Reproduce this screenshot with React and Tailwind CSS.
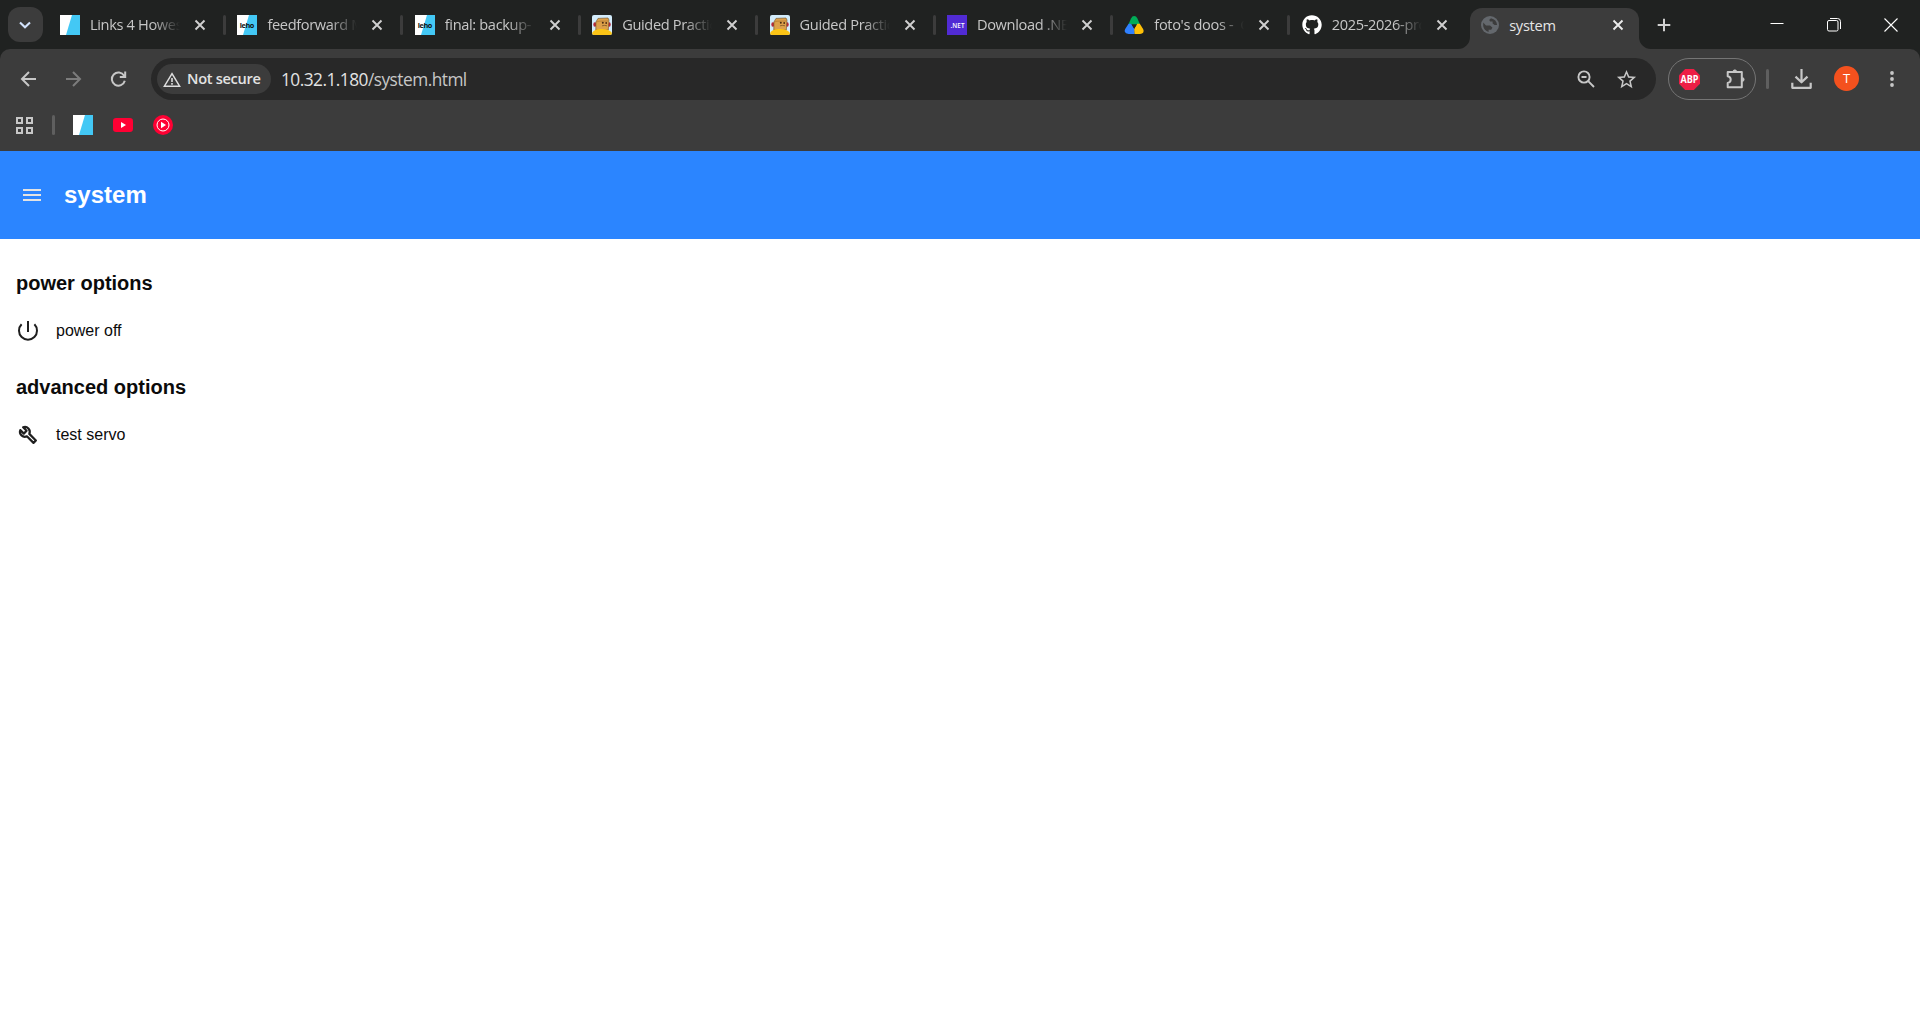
import clsx from "clsx";
import { FaGithub } from "react-icons/fa";
import { MdStarBorder } from "react-icons/md";

const tabs = [
  { title: "Links 4 Howest", icon: "howest" },
  { title: "feedforward MVP", icon: "leho" },
  { title: "final: backup-", icon: "leho" },
  { title: "Guided Practice", icon: "robot" },
  { title: "Guided Practice", icon: "robot" },
  { title: "Download .NET", icon: "dotnet" },
  { title: "foto's doos -\u00a0 G", icon: "drive" },
  { title: "2025-2026-pro", icon: "github" },
];

function HowestIcon({ label }) {
  return (
    <svg viewBox="0 0 20 20" className="size-5 shrink-0">
      <rect width="20" height="20" fill="#fff" />
      <path d="M12 0H20V20H6Z" fill="#43c8f5" />
      {label && (
        <text x="10" y="12.8" textAnchor="middle" fontSize="7.3" fontWeight="700" fontFamily="Open Sans, sans-serif" fill="#111" textLength="14.5">
          {label}
        </text>
      )}
    </svg>
  );
}

function RobotIcon() {
  return (
    <svg viewBox="0 0 20 20" className="size-5 shrink-0 rounded-[2px]">
      <rect width="20" height="20" fill="#d3ecfb" />
      <ellipse cx="2.9" cy="9.5" rx="1.6" ry="2.3" fill="#b8283a" />
      <ellipse cx="17.3" cy="9.5" rx="1.4" ry="2.2" fill="#b8283a" />
      <path d="M6 3.4 16 3 17 5 16.3 15H3.8L3.9 7Z" fill="#dda04a" stroke="#6b4a22" strokeWidth=".6" />
      <path d="M4.5 7 7 6.2 16 6" stroke="#a8712c" strokeWidth=".6" fill="none" />
      <circle cx="10.8" cy="7.8" r="1" fill="#4a2c12" />
      <circle cx="14.2" cy="8" r=".9" fill="#4a2c12" />
      <path d="M10 10.8Q12.5 10 15 10.8" stroke="#6b4a22" strokeWidth=".7" fill="none" />
      <path d="M0 18Q2.5 13.8 9 14 17 13.6 20 18V20H0Z" fill="#fbc416" />
    </svg>
  );
}

function DotnetIcon() {
  return (
    <svg viewBox="0 0 20 20" className="size-5 shrink-0">
      <rect width="20" height="20" fill="#512bd4" />
      <text x="10.5" y="12.5" textAnchor="middle" fontSize="6.3" fontWeight="600" fontFamily="Open Sans, sans-serif" fill="#fff" textLength="14">
        .NET
      </text>
    </svg>
  );
}

function DriveIcon() {
  return (
    <svg viewBox="0 0 20 20" className="size-5 shrink-0">
      <path d="M4.6 9 7 3.4Q8.2 1 10.2 1T13.4 3.4L15.8 9 10.2 11Z" fill="#00ac57" />
      <path d="M4.6 8.8H7.2L10.6 14.6V18.9H4.6Q1.4 18.9.8 16.8 .4 15.6 1.2 14Z" fill="#2f80ff" />
      <path d="M15.8 8.8H13.2L10.2 14 10.6 18.9H15.8Q19 18.9 19.5 16.8 19.9 15.6 19.1 14Z" fill="#ffc107" />
      <path d="M7.4 9.2H13L10.2 13.4Z" fill="#202221" />
    </svg>
  );
}

function GlobeIcon() {
  return (
    <svg viewBox="0 0 20 20" className="size-5 shrink-0">
      <circle cx="10" cy="10" r="9" fill="#64686d" />
      <path d="M11 3.2Q16.5 4.5 17.1 10H14.6L12.6 8.6V6.6H10.2L9.2 5Z" fill="#3c3c3c" />
      <path d="M3.2 7.5V11Q4 15.4 8.6 16.9V14.8H11.2L12.4 12.6 10 10.4H6Z" fill="#3c3c3c" />
    </svg>
  );
}

function Favicon({ name }) {
  switch (name) {
    case "howest":
      return <HowestIcon />;
    case "leho":
      return <HowestIcon label="leho" />;
    case "robot":
      return <RobotIcon />;
    case "dotnet":
      return <DotnetIcon />;
    case "drive":
      return <DriveIcon />;
    case "github":
      return <FaGithub size={20} className="shrink-0 text-white" />;
    default:
      return <GlobeIcon />;
  }
}

function CloseIcon({ className }) {
  return (
    <svg viewBox="0 0 12 12" className={clsx("size-3 shrink-0", className)}>
      <path d="M1.5 1.5 10.5 10.5M10.5 1.5 1.5 10.5" stroke="currentColor" strokeWidth="1.9" />
    </svg>
  );
}

function Tab({ title, icon, last }) {
  return (
    <div className="flex h-full w-[177.4px] shrink-0 items-center pl-[11px]">
      <Favicon name={icon} />
      <span className="ml-[10px] w-[90px] overflow-hidden pt-px whitespace-nowrap text-[14.6px] tracking-[-0.35px] text-[#c7c7c7] mask-r-from-70% mask-r-to-100%">
        {title}
      </span>
      <CloseIcon className="ml-[14px] text-[#d0d0d0]" />
      {/* no divider next to the active tab */}
      {!last && <span className="ml-[17px] h-5 w-[3px] rounded-full bg-[#3c3c3c]" />}
    </div>
  );
}

function ActiveTab() {
  return (
    <div className="relative ml-[2px] mt-2 flex h-[41px] w-[169px] shrink-0 items-center self-start rounded-t-xl bg-[#3c3c3c] pb-[7px] pl-[10px]">
      <svg viewBox="0 0 12 12" className="absolute bottom-0 -left-3 size-3">
        <path d="M12 0V12H0A12 12 0 0 0 12 0Z" fill="#3c3c3c" />
      </svg>
      <svg viewBox="0 0 12 12" className="absolute -right-3 bottom-0 size-3">
        <path d="M0 0V12H12A12 12 0 0 1 0 0Z" fill="#3c3c3c" />
      </svg>
      <Favicon name="globe" />
      <span className="ml-[9px] w-[98px] pt-px text-[14.6px] tracking-[-0.25px] text-[#e6e6e6]">system</span>
      <CloseIcon className="ml-[5px] text-[#ececec]" />
    </div>
  );
}

function TabStrip() {
  return (
    <div className="flex h-[49px] items-center bg-[#202221]">
      <button className="ml-2 flex size-[35px] shrink-0 items-center justify-center rounded-xl bg-[#3c3c3c] pr-px">
        <svg viewBox="0 0 12 8" className="h-2 w-3">
          <path d="M1 1.5 6 6.3 11 1.5" fill="none" stroke="#d3e3fd" strokeWidth="2.1" />
        </svg>
      </button>
      <div className="ml-[6px] flex h-full items-center">
        {tabs.map((tab, i) => (
          <Tab key={i} {...tab} last={i === tabs.length - 1} />
        ))}
        <ActiveTab />
      </div>
      <svg viewBox="0 0 14 14" className="ml-[18px] size-[14px] shrink-0">
        <path d="M7 .7V13.3M.7 7H13.3" stroke="#d0d0d0" strokeWidth="2" />
      </svg>
      {/* Window controls */}
      <div className="ml-auto flex items-center gap-[43px] pr-[22px] text-white">
        <svg viewBox="0 0 14 14" className="size-[14px]">
          <path d="M.5 5.5H13.5" stroke="currentColor" />
        </svg>
        <svg viewBox="0 0 14 14" className="size-[14px]" fill="none" stroke="currentColor">
          <rect x=".5" y="2.5" width="10.5" height="10.5" rx="1.5" />
          <path d="M3 .5H10.5Q13.5.5 13.5 3.5V11" />
        </svg>
        <svg viewBox="0 0 14 14" className="size-[14px]">
          <path d="M.5.5 13.5 13.5M13.5.5.5 13.5" stroke="currentColor" strokeWidth="1.1" />
        </svg>
      </div>
    </div>
  );
}

function AddressBar() {
  return (
    <div className="ml-[24px] flex h-[42px] w-[1505px] items-center rounded-full bg-[#282828] pl-[6px]">
      <div className="flex h-[30px] w-[114px] items-center rounded-full bg-[#3c3c3c] pl-[6px]">
        <svg viewBox="0 0 18 15" className="h-[15px] w-[18px]" fill="none" stroke="#dedede">
          <path d="M9 1.6 16.6 14.2H1.4Z" strokeWidth="1.5" />
          <path d="M9 6V10M9 11V12.7" strokeWidth="1.6" />
        </svg>
        <span className="ml-[6px] whitespace-nowrap text-[14.6px] font-semibold tracking-[-0.3px] text-[#e3e3e3]">Not secure</span>
      </div>
      <span className="ml-[10px] whitespace-nowrap pt-px text-[17.3px] tracking-[-0.52px] text-[#e3e3e3]">
        10.32.1.180<span className="text-[#c7c7c7]">/system.html</span>
      </span>
      <svg viewBox="0 0 18 18" className="ml-auto size-[18px]" fill="none" stroke="#c7c7c7" strokeWidth="1.9">
        <circle cx="7" cy="7" r="5.6" />
        <path d="M11.2 11.2 17 17M4.5 7H9.5" />
      </svg>
      <MdStarBorder size={23} className="mr-[18px] ml-[20px] text-[#c7c7c7]" />
    </div>
  );
}

function Toolbar() {
  return (
    <div className="flex h-[60px] items-center pl-[20px]">
      <svg viewBox="0 0 17 17" className="size-[17px]" fill="none" stroke="#c7c7c7" strokeWidth="2">
        <path d="M16 8H2.5M9 1 2 8 9 15" />
      </svg>
      <svg viewBox="0 0 17 17" className="ml-7 size-[17px]" fill="none" stroke="#7c7c7c" strokeWidth="2">
        <path d="M1 8H14.5M8 1 15 8 8 15" />
      </svg>
      <svg viewBox="0 0 17 17" className="ml-7 size-[17px]" fill="none" stroke="#c7c7c7" strokeWidth="2">
        <path d="M14.8 9.8A6.6 6.6 0 1 1 14.1 4.7M15.2.5V5.9H9.8" />
      </svg>
      <AddressBar />
      <div className="ml-3 flex h-[42px] w-[88px] items-center rounded-full border border-[#757575] pl-[10px]">
        <svg viewBox="0 0 21 21" className="size-[21px]">
          <path d="M6.2 0H14.8L21 6.2V14.8L14.8 21H6.2L0 14.8V6.2Z" fill="#ed1e45" />
          <text x="10.5" y="14" textAnchor="middle" fontSize="10" fontWeight="700" fontFamily="Open Sans, sans-serif" fill="#fff" textLength="18" lengthAdjust="spacingAndGlyphs">
            ABP
          </text>
        </svg>
        <svg viewBox="0 0 22 22" className="ml-[24px] size-[22px]">
          <path d="M3.7 4H17.8V19.2H3.7V15Q6.7 14.5 6.7 11.6T3.7 8.2Z" fill="none" stroke="#c7c7c7" strokeWidth="2" strokeLinejoin="round" />
          <path d="M8.9 3.3A2 2 0 0 1 12.7 3.3ZM18.7 9.6A2 2 0 0 1 18.7 13.4Z" fill="#c7c7c7" stroke="#c7c7c7" />
        </svg>
      </div>
      <span className="ml-[10px] h-5 w-[3px] rounded-full bg-[#5f5f5f]" />
      <svg viewBox="0 0 22 22" className="ml-[21px] size-[22px]" fill="none" stroke="#c7c7c7" strokeWidth="2.2">
        <path d="M11.5 1V14M5.5 8.6 11.5 14.3 17.5 8.6M2.3 14.8V19.8H20.7V14.8" strokeLinejoin="round" />
      </svg>
      <div className="mb-px ml-[22px] flex size-[25px] items-center justify-center rounded-full bg-[#f4511e] text-[13px] text-white">
        T
      </div>
      <svg viewBox="0 0 4 16" className="mb-px ml-[30.5px] h-4 w-1" fill="#c7c7c7">
        <circle cx="2" cy="2" r="1.9" />
        <circle cx="2" cy="8" r="1.9" />
        <circle cx="2" cy="14" r="1.9" />
      </svg>
    </div>
  );
}

function BookmarksBar() {
  return (
    <div className="flex h-[42px] items-center pb-[10px] pl-[15px]">
      <svg viewBox="0 0 19 19" className="size-[19px]" fill="none" stroke="#c7c7c7" strokeWidth="2">
        <rect x="2" y="2" width="5" height="5" />
        <rect x="12" y="2" width="5" height="5" />
        <rect x="2" y="12" width="5" height="5" />
        <rect x="12" y="12" width="5" height="5" />
      </svg>
      <span className="ml-[18px] h-5 w-[3px] rounded-full bg-[#5f5f5f]" />
      <div className="ml-[18px] flex items-center gap-5">
        <HowestIcon />
        <svg viewBox="0 0 20 20" className="size-5">
          <rect y="3" width="20" height="14" rx="3.2" fill="#ff0033" />
          <path d="M8 7 13 10 8 13Z" fill="#fff" />
        </svg>
        <svg viewBox="0 0 20 20" className="size-5">
          <circle cx="10" cy="10" r="10" fill="#ff0033" />
          <circle cx="10" cy="10" r="6" fill="none" stroke="#fff" strokeWidth="1" />
          <path d="M8 6.8 13 10 8 13.2Z" fill="#fff" />
        </svg>
      </div>
    </div>
  );
}

function PowerIcon() {
  return (
    <svg viewBox="0 0 24 24" className="size-6" fill="none" stroke="#1f1f1f" strokeWidth="2">
      <path d="M12 2V13M5.6 5.3A9 9 0 1 0 18.4 5.3" />
    </svg>
  );
}

function WrenchIcon() {
  return (
    <svg viewBox="0 0 24 24" className="size-6" fill="none" stroke="#1f1f1f" strokeWidth="2.2" strokeLinejoin="round">
      <path d="M7.1 4.3A4.9 4.9 0 0 1 13.3 10.9L19.9 17.5 17.5 19.9 10.9 13.3A4.9 4.9 0 0 1 4.3 7.1L7.8 10.6 10.6 7.8Z" />
    </svg>
  );
}

function Option({ icon, children }) {
  return (
    <div className="flex h-6 items-center gap-4">
      {icon}
      <span className="text-base leading-6">{children}</span>
    </div>
  );
}

export default function App() {
  return (
    <div className="h-[1020px] w-[1920px] overflow-hidden bg-white">
      <div className="bg-[#202221] font-['Open_Sans',sans-serif]">
        <TabStrip />
        <div className="h-[102px] rounded-t-[10px] bg-[#3c3c3c]">
          <Toolbar />
          <BookmarksBar />
        </div>
      </div>
      <div className="font-['Liberation_Sans',Arial,sans-serif] text-[#0b0b0b]">
        <header className="flex h-[88px] items-center gap-5 bg-[#2b85ff] pl-5">
          <svg viewBox="0 0 24 24" className="size-6">
            <path d="M3 7H21M3 12H21M3 17H21" stroke="#e3e3e3" strokeWidth="2" />
          </svg>
          <h1 className="text-2xl font-bold text-white">system</h1>
        </header>
        <main className="px-4 pt-8">
          <h2 className="text-xl leading-6 font-bold">power options</h2>
          <div className="mt-6">
            <Option icon={<PowerIcon />}>power off</Option>
          </div>
          <h2 className="mt-8 text-xl leading-6 font-bold">advanced options</h2>
          <div className="mt-6">
            <Option icon={<WrenchIcon />}>test servo</Option>
          </div>
        </main>
      </div>
    </div>
  );
}
